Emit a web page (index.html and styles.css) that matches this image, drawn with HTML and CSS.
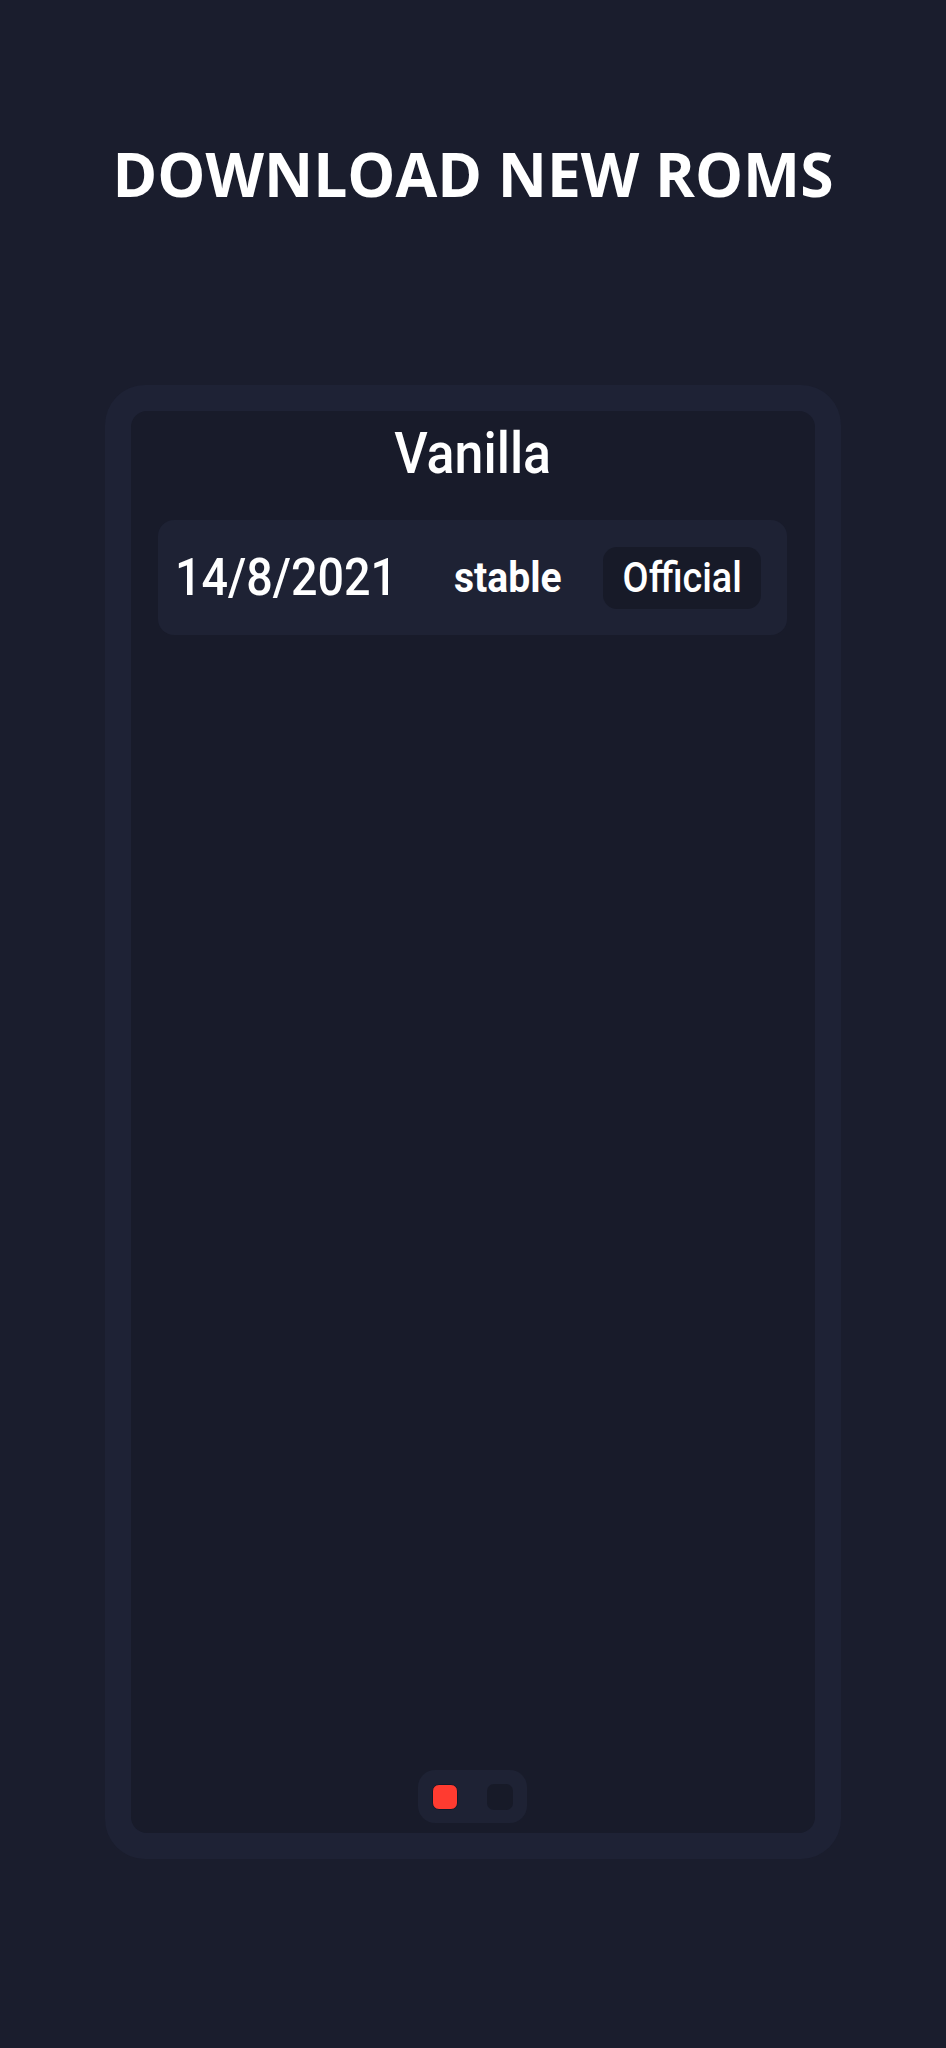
FILE: index.html
```html
<!DOCTYPE html>
<html lang="en">
<head>
<meta charset="utf-8">
<title>Download new ROMs</title>
<link rel="stylesheet" href="styles.css">
</head>
<body>
<main class="page">
  <h1 class="title">DOWNLOAD NEW ROMS</h1>
  <section class="card">
    <div class="panel">
      <h2 class="name"><span class="name-text">Vanilla</span></h2>
      <div class="row">
        <span class="date">14/8/2021</span>
        <span class="channel">stable</span>
        <span class="badge"><span class="badge-text">Official</span></span>
      </div>
      <div class="pager">
        <span class="dot dot-active"></span>
        <span class="dot"></span>
      </div>
    </div>
  </section>
</main>
</body>
</html>
```
FILE: styles.css
```css
html, body {
  margin: 0;
  padding: 0;
}
body {
  background: #1a1d2d;
  color: #ffffff;
  font-family: Roboto, "Noto Sans", sans-serif;
}
.page {
  display: flex;
  flex-direction: column;
  align-items: center;
  padding-top: 135px;
}
.title {
  margin: 0;
  font-family: "Open Sans", "Noto Sans", sans-serif;
  font-weight: 700;
  font-size: 60.5px;
  line-height: 78px;
  color: #ffffff;
  white-space: nowrap;
}
.card {
  margin-top: 172px;
  width: 736px;
  height: 1474px;
  box-sizing: border-box;
  padding: 26px;
  border-radius: 40px;
  background: #1e2235;
}
.panel {
  height: 100%;
  box-sizing: border-box;
  display: flex;
  flex-direction: column;
  padding: 8px 28px 10px 27px;
  border-radius: 16px;
  background: #181b2a;
}
.name {
  margin: 0;
  text-align: center;
  font-weight: 500;
  font-size: 58px;
  line-height: 68px;
}
.name-text {
  display: inline-block;
  transform: scaleX(0.895);
}
.row {
  margin-top: 33px;
  height: 115px;
  display: flex;
  align-items: center;
  padding: 0 26px 0 17px;
  border-radius: 16px;
  background: #1e2234;
}
.date {
  flex: none;
  width: 279px;
  font-weight: 500;
  font-size: 51px;
  transform: scaleX(0.915);
  transform-origin: left center;
  white-space: nowrap;
}
.channel {
  font-weight: 700;
  font-size: 42px;
  transform: scaleX(0.93);
  transform-origin: left center;
}
.badge {
  margin-left: auto;
  width: 158px;
  height: 62px;
  display: flex;
  align-items: center;
  justify-content: center;
  border-radius: 14px;
  background: #171a28;
}
.badge-text {
  font-size: 42px;
  font-weight: 500;
  transform: scaleX(0.9);
}
.pager {
  margin-top: auto;
  align-self: center;
  height: 53px;
  box-sizing: border-box;
  display: flex;
  align-items: center;
  gap: 29px;
  padding: 0 14px 0 14px;
  border-radius: 17px;
  background: #1e2234;
}
.dot {
  width: 26px;
  height: 26px;
  box-sizing: border-box;
  border-radius: 7px;
  background: #171a28;
}
.dot-active {
  background: #ff3b30;
  border: 1px solid #10192a;
}
```
